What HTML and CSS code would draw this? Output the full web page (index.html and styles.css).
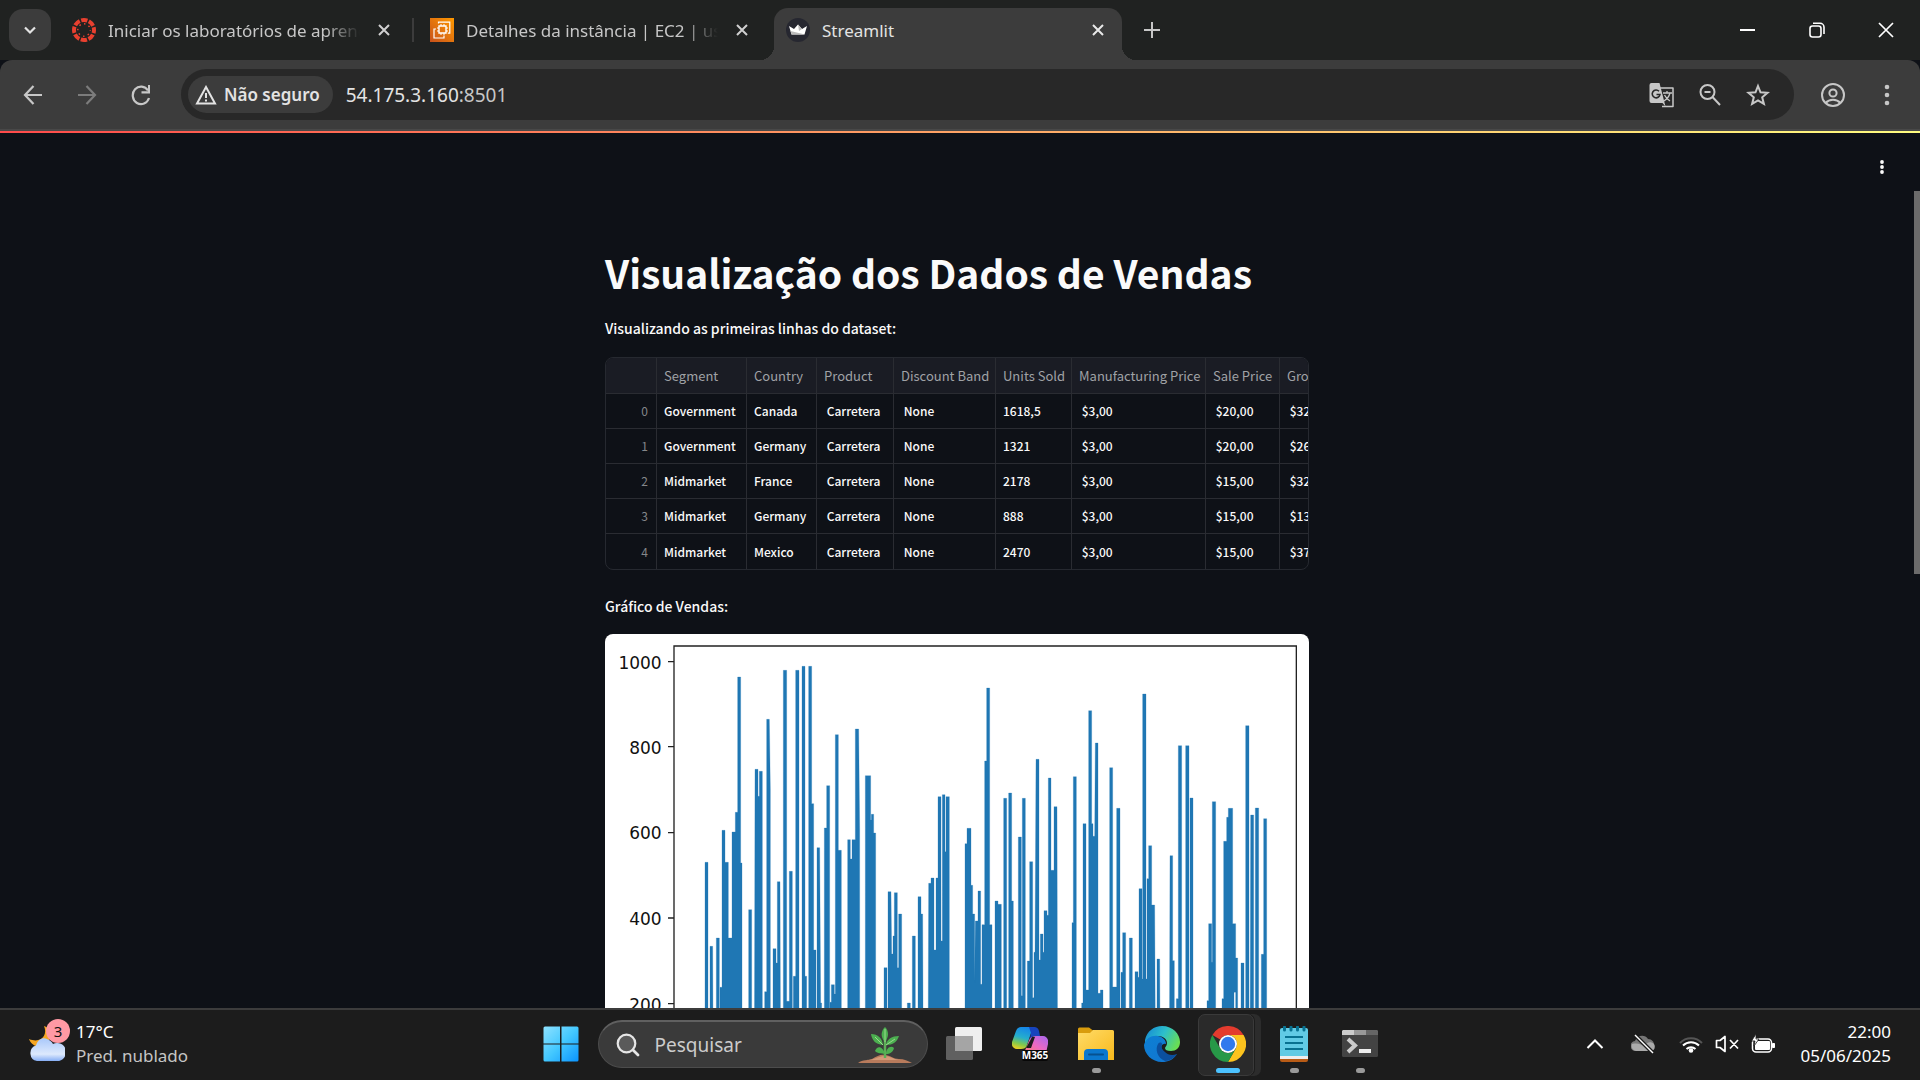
FILE: index.html
```html
<!DOCTYPE html>
<html lang="pt-BR">
<head>
<meta charset="utf-8">
<title>Streamlit</title>
<link rel="stylesheet" href="styles.css">
</head>
<body>
<div class="desktop">
  <header class="tabstrip">
    <button class="tab-search" aria-label="Pesquisar guias"><svg width="14" height="14" viewBox="0 0 14 14"><path d="M2 4.500l5 5 5-5" fill="none" stroke="#e3e3e3" stroke-width="2.200"/></svg></button>
    <div class="tab">
      <svg class="favicon" width="24" height="24" viewBox="0 0 24 24"><circle cx="12" cy="12" r="10" fill="none" stroke="#e8402f" stroke-width="4" stroke-dasharray="6.300 1.554" stroke-dashoffset="3.150"/><circle cx="12" cy="12" r="6.200" fill="none" stroke="#e8402f" stroke-width="1.500" stroke-dasharray="1.500 3.370" stroke-dashoffset=".75"/></svg>
      <span class="tab-title fade">Iniciar os laboratórios de aprendizagem</span>
      <button class="tab-close" aria-label="Fechar"><svg width="12" height="12" viewBox="0 0 12 12"><path d="M1 1l10 10M11 1L1 11" stroke="#d0d0d0" stroke-width="2"/></svg></button>
    </div>
    <span class="tab-separator"></span>
    <div class="tab">
      <svg class="favicon" width="24" height="24" viewBox="0 0 24 24"><defs><linearGradient id="aws" x1="0" y1="1" x2="1" y2="0"><stop stop-color="#c8511b"/><stop offset="1" stop-color="#f90"/></linearGradient></defs><path fill="url(#aws)" d="M0 0h24v24H0z"/><g fill="none" stroke="#fff"><path d="M9 8h7v7H9z" stroke-width="1.400"/><path d="M11 6v2M14 6v2M11 15v2M14 15v2M7 10h2M7 13h2M16 10h2M16 13h2" stroke-width="1"/><path d="M8.500 5.500V4.200h11.300v11h-2M6 11H4v9h10v-2.500" stroke-width="1.200"/></g></svg>
      <span class="tab-title fade">Detalhes da instância | EC2 | us-east-1</span>
      <button class="tab-close" aria-label="Fechar"><svg width="12" height="12" viewBox="0 0 12 12"><path d="M1 1l10 10M11 1L1 11" stroke="#d0d0d0" stroke-width="2"/></svg></button>
    </div>
    <div class="tab active">
      <svg class="favicon" width="24" height="24" viewBox="0 0 24 24"><circle cx="12" cy="12" r="12" fill="#262730"/><path d="M3 8l5 3 4-4.500L16 11l5-3-2.500 8.500h-13z" fill="#fff"/><path d="M4.500 13l14.500 3.500h-13.500zM12 6.500L16 11l-3 2z" fill="#bbb"/></svg>
      <span class="tab-title">Streamlit</span>
      <button class="tab-close" aria-label="Fechar"><svg width="12" height="12" viewBox="0 0 12 12"><path d="M1 1l10 10M11 1L1 11" stroke="#e8e8e8" stroke-width="2"/></svg></button>
    </div>
    <button class="new-tab" aria-label="Nova guia"><svg width="16" height="16" viewBox="0 0 16 16"><path d="M8 0v16M0 8h16" stroke="#c7c7c7" stroke-width="2"/></svg></button>
    <div class="window-controls">
      <button aria-label="Minimizar"><svg width="16" height="16" viewBox="0 0 16 16"><path d="M0 8h15" stroke="#fff" stroke-width="2"/></svg></button>
      <button aria-label="Restaurar"><svg width="16" height="16" viewBox="0 0 16 16"><g fill="none" stroke="#fff" stroke-width="1.600"><rect x="1" y="4" width="11" height="11" rx="2.500"/><path d="M4 1.300h7a4 4 0 0 1 4 4V12"/></g></svg></button>
      <button aria-label="Fechar janela"><svg width="16" height="16" viewBox="0 0 16 16"><path d="M1 1l14 14M15 1L1 15" stroke="#fff" stroke-width="1.700"/></svg></button>
    </div>
  </header>

  <nav class="toolbar">
    <button class="nav-button" aria-label="Voltar"><svg width="20" height="22" viewBox="0 0 20 22"><path d="M19 11H2M10.500 2L2 11l8.500 9" fill="none" stroke="#c7c7c7" stroke-width="2.200"/></svg></button>
    <button class="nav-button" aria-label="Avançar"><svg width="20" height="22" viewBox="0 0 20 22"><path d="M1 11h17M9.500 2l8.500 9-8.500 9" fill="none" stroke="#7c7c7c" stroke-width="2.200"/></svg></button>
    <button class="nav-button" aria-label="Recarregar"><svg width="20" height="22" viewBox="0 0 20 22"><path d="M17 6.500A8.300 8.800 0 1 0 18 14" fill="none" stroke="#c7c7c7" stroke-width="2.200"/><path d="M19 1v8.500h-8.500V7.300H17V1z" fill="#c7c7c7"/></svg></button>
    <div class="omnibox">
      <button class="security-chip"><svg width="22" height="20" viewBox="0 0 22 20"><path d="M11 2L20 18.500H2z" fill="none" stroke="#e3e3e3" stroke-width="2"/><path d="M11 8v5M11 14.500v2" stroke="#e3e3e3" stroke-width="2"/></svg>Não seguro</button>
      <a class="url" href="#">54.175.3.160<span>:8501</span></a>
      <div class="omnibox-actions">
        <button aria-label="Traduzir"><svg width="26" height="26" viewBox="0 0 26 26"><path d="M11 6h13v18.500H13" fill="none" stroke="#c7c7c7" stroke-width="1.500" stroke-linejoin="round"/><path d="M2.500 1h8l6 23.500L13.500 21H2.500A2 2 0 0 1 .5 19V3a2 2 0 0 1 2-2z" fill="#c7c7c7"/><path d="M10 9.300A3.900 3.900 0 1 0 11 12.500H7.500" fill="none" stroke="#282828" stroke-width="1.600"/><path d="M14 11h9M18 9v2M21 11c-1 4-3 6-6 8M15.500 13c1.500 3 3 4.500 5.500 6" fill="none" stroke="#c7c7c7" stroke-width="1.300"/></svg></button>
        <button aria-label="Zoom"><svg width="22" height="22" viewBox="0 0 22 22"><circle cx="8.500" cy="8" r="7" fill="none" stroke="#c7c7c7" stroke-width="2"/><path d="M13.500 13l7.500 8M5.500 8h6" stroke="#c7c7c7" stroke-width="2"/></svg></button>
        <button aria-label="Favorito"><svg width="24" height="24" viewBox="0 0 24 24"><path d="M12 3l2.500 6.300 7 .5-5.300 4.500 1.700 6.600L12 17.300l-5.900 3.600 1.700-6.600L2.500 9.800l7-.5z" fill="none" stroke="#c7c7c7" stroke-width="2"/></svg></button>
      </div>
    </div>
    <button class="profile" aria-label="Perfil"><svg width="26" height="26" viewBox="0 0 26 26"><g fill="none" stroke="#c7c7c7" stroke-width="2"><circle cx="13" cy="13" r="11"/><circle cx="13" cy="11" r="3.600"/><path d="M5.500 21c4-4.500 11-4.500 15 0"/></g></svg></button>
    <button class="menu" aria-label="Menu"><svg width="6" height="22" viewBox="0 0 6 22"><g fill="#c7c7c7"><circle cx="3" cy="3" r="2.300"/><circle cx="3" cy="11" r="2.300"/><circle cx="3" cy="19" r="2.300"/></g></svg></button>
  </nav>

  <main class="app">
    <div class="decoration"></div>
    <div class="app-header"><button aria-label="Menu do aplicativo"><svg width="4" height="14" viewBox="0 0 4 14"><g fill="#fafafa"><circle cx="2" cy="2" r="1.900"/><circle cx="2" cy="7" r="1.900"/><circle cx="2" cy="12" r="1.900"/></g></svg></button></div>
    <div class="scroll-thumb"></div>
    <div class="block">
      <h1>Visualização dos Dados de Vendas</h1>
      <p>Visualizando as primeiras linhas do dataset:</p>
      <div class="dataframe">
        <table>
          <colgroup><col class="w-index"><col class="w-segment"><col class="w-country"><col class="w-product"><col class="w-band"><col class="w-units"><col class="w-manufacturing"><col class="w-sale"><col class="w-gross"></colgroup>
          <thead><tr><th></th><th>Segment</th><th>Country</th><th>Product</th><th>Discount Band</th><th>Units Sold</th><th>Manufacturing Price</th><th>Sale Price</th><th>Gross Sales</th></tr></thead>
          <tbody>
            <tr><th>0</th><td>Government</td><td>Canada</td><td>&nbsp;Carretera</td><td>&nbsp;None</td><td>1618,5</td><td>&nbsp;$3,00</td><td>&nbsp;$20,00</td><td>&nbsp;$32.370,00</td></tr>
            <tr><th>1</th><td>Government</td><td>Germany</td><td>&nbsp;Carretera</td><td>&nbsp;None</td><td>1321</td><td>&nbsp;$3,00</td><td>&nbsp;$20,00</td><td>&nbsp;$26.420,00</td></tr>
            <tr><th>2</th><td>Midmarket</td><td>France</td><td>&nbsp;Carretera</td><td>&nbsp;None</td><td>2178</td><td>&nbsp;$3,00</td><td>&nbsp;$15,00</td><td>&nbsp;$32.670,00</td></tr>
            <tr><th>3</th><td>Midmarket</td><td>Germany</td><td>&nbsp;Carretera</td><td>&nbsp;None</td><td>888</td><td>&nbsp;$3,00</td><td>&nbsp;$15,00</td><td>&nbsp;$13.320,00</td></tr>
            <tr><th>4</th><td>Midmarket</td><td>Mexico</td><td>&nbsp;Carretera</td><td>&nbsp;None</td><td>2470</td><td>&nbsp;$3,00</td><td>&nbsp;$15,00</td><td>&nbsp;$37.050,00</td></tr>
          </tbody>
        </table>
      </div>
      <p>Gráfico de Vendas:</p>
      <svg class="chart" viewBox="0 0 2112 1584" role="img" aria-label="Gráfico de Vendas">
        <g class="series">
          <path transform="translate(-15 -15)" d="M315 1400V700H324V1400ZM330 1400V952H338L340 1400ZM349 1400V927H358V1400ZM360 1400V1075H366V604H375V700H385V927H396V609H406V550H413V144H422V702H426V1400ZM446 1400V842H455V1400ZM463 1400L465 421H474V502H478V427H487V1400ZM494 1400V1088H500V271H508L511 480V1400ZM519 1400V959H528V1002H532V758H540L542 1400ZM550 1400V124H560V1117H568V727H577V1400ZM580 1400V1042H587V124H597V1400ZM606 1400V112H615V1042H620V1400ZM626 1400V112H635V524H641V963H648V1400ZM651 1400V656H659L662 1122H665V1400ZM673 1400V597H680V470H689V1400ZM690 1400V1120H694V1067H703V1095H706V317H715V664H724V1400Z"/>
          <path transform="translate(675 -15)" d="M53 1400V632H61V690H66V632H76V300H86L89 600V1400ZM106 1400V440H122V573H124V556H131V612H137V1400ZM162 1400V1016H171V1400ZM174 1400V788H183L185 975H189V921H193V791H202V1016H206V855H215V1400ZM232 1400V1122H241V1400ZM247 1400V921H256V1400ZM264 1400V803H273V855H278L280 1400ZM294 1400L296 763H303V747H312V963H318V747H324V503H333V936H337V497H345V668H348V503H358V1400ZM405 1400V644H411V598H423V769H428V855H434V1060L436 876H444V786H452V1066H456V887H464V396H470V177H479V887H486V1400ZM495 1400V816H504V826H514V1400ZM521 1400V508H530V1400ZM536 1400V492H545V816H550V1400ZM565 1400V624H574V1100H577V508H586V1400ZM592 1400V996H599V698H608V1106H612V970H615L618 391H627V993H631V915H639V970H642V845H651V859H655V447H663V724H672V533H681L683 1400ZM726 1400V881H730V443H739V1400Z"/>
          <path transform="translate(1395 -15)" d="M35 1400V1122H39V584H48V1083H56V245H65V584H69V622H74L76 342H84V1093H91V1083H99V1400ZM119 1400V416H128V1074H140V538H150V1400ZM153 1400V1030H158V911H167V1400ZM178 1400V927H187V1400ZM195 1400V1028H204V1045H207V779H216V1050H218V195H228V1050H231V749H236V650H245V828H254L257 1400ZM261 1400V990H269L271 1400ZM298 1400L300 680H308V995H313V1400ZM319 1400V1109H325V350H335V1400ZM347 1400V350H357V1400ZM360 1400V507H369V1400ZM411 1400V1115H416V884H425V1000H427V518H437V1400ZM456 1400V1109H461V637H470V565H475V538H488V884H497V987H503V1400H497V1090H492V1400ZM513 1400V1002H522V1400ZM527 1400V290H537V1400ZM540 1400L542 558H551V1400ZM556 1400V537H566V1400ZM574 1400V976H581V569H590V1400Z"/>
        </g>
        <path class="axes" d="M207 1400V36H2074V1400M189 83H207M189 338H207M189 596H207M189 852H207M189 1109H207"/>
        <g class="ticks"><text x="170" y="104">1000</text><text x="170" y="359">800</text><text x="170" y="616">600</text><text x="170" y="873">400</text><text x="170" y="1130">200</text></g>
      </svg>
    </div>
  </main>

  <footer class="taskbar">
    <button class="weather">
      <span class="weather-icon"><svg width="36" height="40" viewBox="0 0 36 40"><defs><linearGradient id="cl" x1="0" y1="0" x2="0" y2="1"><stop stop-color="#a9c8fa"/><stop offset=".7" stop-color="#dde9fd"/><stop offset="1" stop-color="#86aef5"/></linearGradient></defs><path d="M15 2c4 9-3 18-15 13 3 8 12 10 18 4s4-15-3-17z" fill="#f5a623"/><path d="M8 37a8 8 0 0 1-1-15.500C9 15 14 13 18 15c3 1 5 3 6 5a9 9 0 1 1 4 17z" fill="url(#cl)"/></svg><span class="badge">3</span></span>
      <span class="weather-text">17°C<small>Pred. nublado</small></span>
    </button>
    <div class="dock">
      <button class="dock-item" aria-label="Iniciar"><svg width="36" height="36" viewBox="0 0 36 36"><defs><linearGradient id="wn" x1="0" y1="0" x2="1" y2="1"><stop stop-color="#8ee2ff"/><stop offset=".5" stop-color="#44c8ff"/><stop offset="1" stop-color="#0a94ff"/></linearGradient></defs><path d="M2 .5h15v17H.5V2A1.500 1.500 0 0 1 2 .5zM18.500.5H34A1.500 1.500 0 0 1 35.500 2v15.500h-17zM.5 18.500h16.500v17H2A1.500 1.500 0 0 1 .5 34zM18.500 18.500h17V34a1.500 1.500 0 0 1-1.500 1.500H18.500z" fill="url(#wn)"/></svg></button>
      <label class="search">
        <svg width="24" height="24" viewBox="0 0 24 24"><circle cx="10.500" cy="10.500" r="8.800" fill="#5a5a5a" stroke="#e6e6e6" stroke-width="2.200"/><path d="M17 17l5 5" stroke="#e6e6e6" stroke-width="2.800" stroke-linecap="round"/></svg>
        <input type="text" placeholder="Pesquisar" aria-label="Pesquisar">
        <svg width="56" height="38" viewBox="0 0 56 38"><path d="M0 37c5-4 10-2 14-4 5-3 9-5 13-4 5 0 8 4 14 4 5 0 9 2 13 4z" fill="#b87b5c"/><path d="M9 34c7 0 12-4 17-4 6 0 9 3 15 4z" fill="#d39a78"/><path d="M27 32V12" stroke="#5cae57" stroke-width="2.500"/><g fill="#4caf50"><path d="M27 16c-5-5-4-11 0-15 4 4 4 10 0 15z"/><path d="M25 19c-8-1-11-5-12-11 7 0 11 4 12 11zM28 19c1-6 6-9 13-9-2 6-6 9-13 9z"/><path d="M27 28c-4-1-7 0-10-3 2-6 8-5 10 3zM28 28c0-6 5-9 8-6-1 4-4 6-8 6z"/></g><path d="M27 16V3M25 19l-8-8M28 19l9-6" stroke="#9bdb8d"/></svg>
      </label>
      <button class="dock-item" aria-label="Visão de tarefas"><svg width="36" height="36" viewBox="0 0 36 36"><rect x="9" y="1" width="27" height="24" rx="1.500" fill="#efefef"/><rect y="10" width="27" height="24" rx="1.500" fill="#606060"/><path d="M9 10h18v15H9z" fill="#a5a5a5"/></svg></button>
      <button class="dock-item" aria-label="M365 Copilot"><svg width="36" height="36" viewBox="0 0 36 36"><defs><linearGradient id="ca" x1=".5" y1="0" x2=".2" y2="1"><stop stop-color="#1687e8"/><stop offset=".45" stop-color="#25aecd"/><stop offset=".75" stop-color="#83c84b"/><stop offset="1" stop-color="#f2cf20"/></linearGradient><linearGradient id="cb" x1="1" y1="0" x2="0" y2="1"><stop stop-color="#a667f0"/><stop offset=".5" stop-color="#ec69c2"/><stop offset="1" stop-color="#ff8060"/></linearGradient></defs><path d="M24 10h7c4 0 6 4 5 8l-2 9H9c3 0 4-2 5-5l4-10c1-1 3-2 6-2z" fill="url(#cb)"/><path d="M9 1h14c-2 1-3 3-4 6l-4 12c-1 3-3 4-6 4H5c-4 0-6-4-5-7l4-11c1-3 3-4 5-4z" fill="url(#ca)"/><path d="M17 1h5c3 0 4 1 5 4l1 5h-5c-2 0-4 1-5 3l1-6z" fill="#1744bd"/><path d="M20 11h3l-4 11h-5z" fill="#1c1c1c"/><rect x="10" y="24" width="26" height="11" rx="2" fill="#080808"/><text x="23" y="33" text-anchor="middle" class="icon-label">M365</text></svg></button>
      <button class="dock-item running" aria-label="Explorador"><svg width="36" height="36" viewBox="0 0 36 36"><defs><linearGradient id="fd" x1="0" y1="0" x2="1" y2="1"><stop stop-color="#ffdb68"/><stop offset="1" stop-color="#f8b91b"/></linearGradient></defs><path d="M0 3a1.500 1.500 0 0 1 1.500-1.500H11l4 3H20V9H0z" fill="#d99c0d"/><path d="M0 7h12l3-3h19.500A1.500 1.500 0 0 1 36 5.500V34H0z" fill="url(#fd)"/><path d="M6 34v-7a4 4 0 0 1 4-4h16a4 4 0 0 1 4 4v7z" fill="#0b78ce"/><path d="M11 28.500h14" stroke="#07518f" stroke-width="2" stroke-linecap="round"/></svg></button>
      <button class="dock-item" aria-label="Edge"><svg width="36" height="36" viewBox="0 0 36 36"><defs><linearGradient id="eg" x1="0" y1=".2" x2="1" y2=".6"><stop stop-color="#168bd5"/><stop offset=".5" stop-color="#2dbfcb"/><stop offset="1" stop-color="#6ade52"/></linearGradient><linearGradient id="eb" x1="0" y1="0" x2="1" y2="1"><stop stop-color="#0d7fd3"/><stop offset="1" stop-color="#1275d1"/></linearGradient></defs><path d="M1 14C3 5 10 0 18 0c11 0 18 8 18 16 0 6-4 9-9 9-4 0-6-1-6-3 0-1 2-2 2-5 0-4-4-7-9-7-6 0-10 4-13 8z" fill="url(#eg)"/><path d="M0 19C2 12 8 9 14 10c5 1 8 4 8 8-6-2-7 8 0 12 4 2 8 1 11-2-4 6-9 8-15 8C8 36 0 28 0 19z" fill="url(#eb)"/><path d="M14 18c-3 5-1 14 7 17 5 0 9-3 12-7-5 2-9 1-12-2-3-2-4-5-3-8 0-2-3-2-4 0z" fill="#0b4f9e"/></svg></button>
      <button class="dock-item current" aria-label="Chrome"><svg width="36" height="36" viewBox="0 0 36 36"><path d="M2.400 9A18 18 0 0 1 33.600 9H18a9 9 0 0 0-7.800 4.500z" fill="#e33b2e"/><path d="M33.600 9A18 18 0 0 1 18 36l7.800-13.500A9 9 0 0 0 18 9z" fill="#fcc31e"/><path d="M18 36A18 18 0 0 1 2.400 9l7.800 13.500A9 9 0 0 0 25.800 22.500z" fill="#279847"/><circle cx="18" cy="18" r="9" fill="#fff"/><circle cx="18" cy="18" r="7.200" fill="#3079ee"/></svg></button>
      <button class="dock-item running" aria-label="Bloco de notas"><svg width="28" height="36" viewBox="0 0 28 36"><path d="M0 28h28v6a2 2 0 0 1-2 2H2a2 2 0 0 1-2-2z" fill="#b85b16"/><path d="M0 28h28v5H0z" fill="#eee"/><path d="M0 4a2 2 0 0 1 2-2h24a2 2 0 0 1 2 2v26H0z" fill="#61cbe5"/><path d="M5 11h18M5 17h18M5 23h18" stroke="#087291" stroke-width="2"/><path d="M4.500 1v3M11 1v3M17.500 1v3M24 1v3" stroke="#087291" stroke-width="3" stroke-linecap="round"/></svg></button>
      <button class="dock-item running" aria-label="Terminal"><svg width="36" height="36" viewBox="0 0 36 36"><rect y="4" width="36" height="27" rx="1.500" fill="#434343"/><path d="M1 4h11v5H0V5z" fill="#ccc"/><path d="M12 4h12v5H12z" fill="#999"/><path d="M24 4h11l1 1v4H24z" fill="#666"/><path d="M6 13l7 6.500L6 26" fill="none" stroke="#ccc" stroke-width="4"/><path d="M17 23h12v4H17z" fill="#eee"/></svg></button>
    </div>
    <div class="tray">
      <button aria-label="Ícones ocultos"><svg width="18" height="12" viewBox="0 0 18 12"><path d="M1.500 10L9 2.500l7.500 7.500" fill="none" stroke="#fff" stroke-width="2"/></svg></button>
      <svg class="cloud" width="24" height="20" viewBox="0 0 24 20"><path d="M5 17a5 5 0 0 1-1-10C6 1 14 0 17 5c7 0 8 9 3 12z" fill="#777"/><path d="M5 17a5 5 0 0 1-4-7c6-1 8 0 12 2 3-4 7-5 10-2 2 3 0 7-3 7z" fill="#aaa"/><path d="M4 1l18 18" stroke="#1c1c1c" stroke-width="4"/><path d="M4 1l18 18" stroke="#fff" stroke-width="1.500"/></svg>
      <button class="quick" aria-label="Rede, som e bateria">
        <svg width="24" height="18" viewBox="0 0 24 18"><path d="M1 8A15 15 0 0 1 23 8" fill="none" stroke="#555" stroke-width="2"/><path d="M4 10.500a11.500 11.500 0 0 1 16 0M7.500 14a7 7 0 0 1 9 0" fill="none" stroke="#fff" stroke-width="2"/><circle cx="12" cy="15.500" r="2.300" fill="#fff"/></svg>
        <svg width="24" height="18" viewBox="0 0 24 18"><path d="M1.500 5.500H5l5-4v15l-5-4H1.500zM15 5l8 8.500M23 5l-8 8.500" fill="none" stroke="#fff" stroke-width="1.700" stroke-linejoin="round"/></svg>
        <svg width="25" height="20" viewBox="0 0 25 20"><rect x="1.500" y="5" width="19" height="13" rx="3.500" fill="none" stroke="#fff" stroke-width="1.500"/><rect x="4" y="7" width="15" height="9" rx="1" fill="#fff"/><path d="M21.500 9.500h2v4h-2z" fill="#fff" stroke="#fff"/><path d="M5 0L.5 7H4l-1 5 5-7H5z" fill="#fff" stroke="#1c1c1c" stroke-width=".8"/></svg>
      </button>
      <button class="clock">22:00<span>05/06/2025</span></button>
    </div>
  </footer>
</div>
</body>
</html>
```

FILE: styles.css
```css
* { box-sizing: border-box; }

body {
  margin: 0;
  background: #0e1117;
  font-family: "Noto Sans", "Open Sans", sans-serif;
}

button {
  display: flex;
  align-items: center;
  justify-content: center;
  padding: 0;
  border: 0;
  background: none;
  color: inherit;
  font: inherit;
}

svg { display: block; flex: none; }

.desktop {
  display: flex;
  flex-direction: column;
  height: 100vh;
  overflow: hidden;
}

/* Tab strip */
.tabstrip {
  display: flex;
  flex: none;
  align-items: center;
  height: 60px;
  padding-left: 9px;
  background: #202221;
  color: #c7c7c7;
  font-size: 17px;
}

.tab-search {
  width: 42px;
  height: 42px;
  margin-right: 9px;
  border-radius: 14px;
  background: #3c3c3c;
}

.tab {
  display: flex;
  align-items: center;
  gap: 12px;
  width: 348px;
  height: 52px;
  padding: 0 12px;
}

.tab-title {
  flex: 1;
  min-width: 0;
  overflow: hidden;
  white-space: nowrap;
}

.fade {
  -webkit-mask-image: linear-gradient(90deg, #000 86%, transparent);
  mask-image: linear-gradient(90deg, #000 86%, transparent);
}

.tab-close { width: 24px; height: 24px; }

.tab-separator {
  width: 2px;
  height: 24px;
  margin: 0 4px;
  background: #3c3c3c;
}

.active {
  position: relative;
  align-self: flex-end;
  margin-left: 8px;
  padding-bottom: 8px;
  border-radius: 14px 14px 0 0;
  background: #3c3c3c;
  color: #e3e3e3;
}

.active::before,
.active::after {
  content: "";
  position: absolute;
  bottom: 0;
  width: 14px;
  height: 14px;
}

.active::before {
  right: 100%;
  background: radial-gradient(circle at 0 0, transparent 14px, #3c3c3c 14px);
}

.active::after {
  left: 100%;
  background: radial-gradient(circle at 100% 0, transparent 14px, #3c3c3c 14px);
}

.new-tab { width: 60px; height: 42px; }

.window-controls {
  display: flex;
  height: 60px;
  margin-left: auto;
}

.window-controls button { width: 69px; }

/* Toolbar */
.toolbar {
  display: flex;
  flex: none;
  align-items: center;
  height: 71px;
  padding: 0 6px;
  border-bottom: 2px solid #484848;
  border-radius: 12px 12px 0 0;
  background: #3c3c3c;
}

.nav-button { width: 54px; height: 42px; }

.omnibox {
  display: flex;
  flex: 1;
  align-items: center;
  height: 51px;
  margin-left: 13px;
  padding: 0 24px 0 7px;
  border-radius: 26px;
  background: #282828;
}

.security-chip {
  gap: 7px;
  height: 37px;
  padding: 0 13px 0 7px;
  border-radius: 19px;
  background: #3c3c3c;
  color: #e3e3e3;
  font-size: 17px;
  font-weight: 600;
}

.url {
  margin-left: 13px;
  color: #e3e3e3;
  font-size: 19px;
  text-decoration: none;
}

.url span { color: #c7c7c7; }

.omnibox-actions {
  display: flex;
  margin-left: auto;
  margin-right: -12px;
}

.omnibox-actions button { width: 48px; height: 42px; }

.profile { width: 78px; height: 42px; }

.menu { width: 30px; height: 42px; margin-right: 12px; }

/* Streamlit page */
.app {
  position: relative;
  flex: 1;
  min-height: 0;
  overflow: hidden;
  padding-right: 6px;
  background: #0e1117;
  color: #fafafa;
  font-family: "Noto Sans CJK SC", "Noto Sans CJK JP", sans-serif;
}

.decoration {
  height: 2px;
  margin-right: -6px;
  background: linear-gradient(90deg, #ff4b4b, #fffd80);
}

.app-header {
  display: flex;
  justify-content: flex-end;
  height: 68px;
  padding-right: 20px;
}

.app-header button { width: 24px; }

.scroll-thumb {
  position: absolute;
  top: 60px;
  right: 0;
  width: 6px;
  height: 383px;
  background: #6b6b6b;
}

.block {
  width: 704px;
  max-width: 100%;
  margin: 0 auto;
  padding-top: 43px;
}

h1 {
  margin: 0;
  font-size: 39px;
  font-weight: 700;
  line-height: 56px;
  white-space: nowrap;
}

p {
  margin: 16px 0;
  font-size: 14px;
  font-weight: 500;
  line-height: 24px;
}

.dataframe {
  overflow: hidden;
  margin: 17px 0 24px;
  border: 1px solid #262930;
  border-radius: 8px;
}

.dataframe table {
  width: 802px;
  border-collapse: separate;
  border-spacing: 0;
  table-layout: fixed;
  font-size: 12px;
  line-height: 20px;
}

.w-index { width: 51px; }
.w-segment { width: 90px; }
.w-country { width: 70px; }
.w-product { width: 77px; }
.w-band { width: 102px; }
.w-units { width: 76px; }
.w-manufacturing { width: 134px; }
.w-sale { width: 74px; }
.w-gross { width: 128px; }

.dataframe th,
.dataframe td {
  height: 35px;
  padding: 0 7px;
  border-right: 1px solid #2a2c32;
  border-bottom: 1px solid #2a2c32;
  text-align: left;
  white-space: nowrap;
}

.dataframe td { font-weight: 500; }

.dataframe th {
  color: #a0a2a6;
  font-weight: 400;
}

.dataframe thead th { height: 36px; background: #1a1c24; font-size: 13px; }
.dataframe tbody th { padding-right: 8px; color: #85878b; text-align: right; }
.dataframe tbody tr:last-child > * { border-bottom: 0; }

.chart {
  width: 100%;
  border-radius: 8px;
  background: #fff;
}

.series { fill: #1f77b4; stroke: #1f77b4; stroke-width: 2; stroke-opacity: .4; }
.axes { fill: none; stroke: #222; stroke-width: 4; }
.ticks { fill: #111; font-family: "DejaVu Sans", sans-serif; font-size: 51px; text-anchor: end; }

/* Taskbar */
.taskbar {
  display: grid;
  flex: none;
  grid-template-columns: 1fr auto 1fr;
  align-items: center;
  height: 72px;
  padding-bottom: 2px;
  border-top: 2px solid #3c3c3c;
  background: #1c1c1c;
  color: #fff;
}

.weather {
  justify-self: start;
  gap: 11px;
  margin-left: 29px;
  font-size: 17px;
  line-height: 24px;
  text-align: left;
}

.weather-icon { position: relative; }

.badge {
  position: absolute;
  top: -5px;
  right: -5px;
  width: 24px;
  height: 24px;
  border-radius: 50%;
  background: #ff99a4;
  color: #111;
  font-size: 15px;
  text-align: center;
}

.weather-text small {
  display: block;
  color: #c5c5c5;
  font-size: 17px;
}

.dock { display: flex; align-items: center; }

.dock-item {
  position: relative;
  width: 66px;
  height: 60px;
}

.search {
  display: flex;
  align-items: center;
  width: 330px;
  height: 48px;
  margin: 0 3px 0 4px;
  padding: 0 13px 0 17px;
  border: 1px solid #4c4c4c;
  border-top: 2px solid #606060;
  border-radius: 24px;
  background: #3a3a3a;
}

.search input {
  flex: 1;
  min-width: 0;
  padding: 0 0 0 15px;
  border: 0;
  background: none;
  color: #ccc;
  font-family: inherit;
  font-size: 19px;
}

.search input::placeholder { color: #ccc; opacity: 1; }

.icon-label { fill: #fff; font-size: 10px; font-weight: 700; }

.running::after,
.current::after {
  content: "";
  position: absolute;
  bottom: 1px;
  left: 50%;
  width: 9px;
  height: 5px;
  margin-left: -4px;
  border-radius: 3px;
  background: #9a9a9a;
}

.current::after { width: 24px; margin-left: -12px; background: #4cc2ff; }

.current::before {
  content: "";
  position: absolute;
  top: 0;
  left: 3px;
  width: 54px;
  height: 60px;
  border: 1px solid #3a3a3a;
  border-radius: 7px;
  background: #2a2a2a;
  box-shadow: 1px 0 0 #1c1c1c, 7px 0 0 #2c2c2c;
}

.current svg { position: relative; }

.tray {
  display: flex;
  justify-self: end;
  align-items: center;
  margin-right: 29px;
}

.cloud { margin: 0 24px 0 27px; }

.quick { gap: 12px; }

.clock {
  display: block;
  margin-left: 25px;
  font-size: 17px;
  line-height: 24px;
  text-align: right;
}

.clock span { display: block; }
```
